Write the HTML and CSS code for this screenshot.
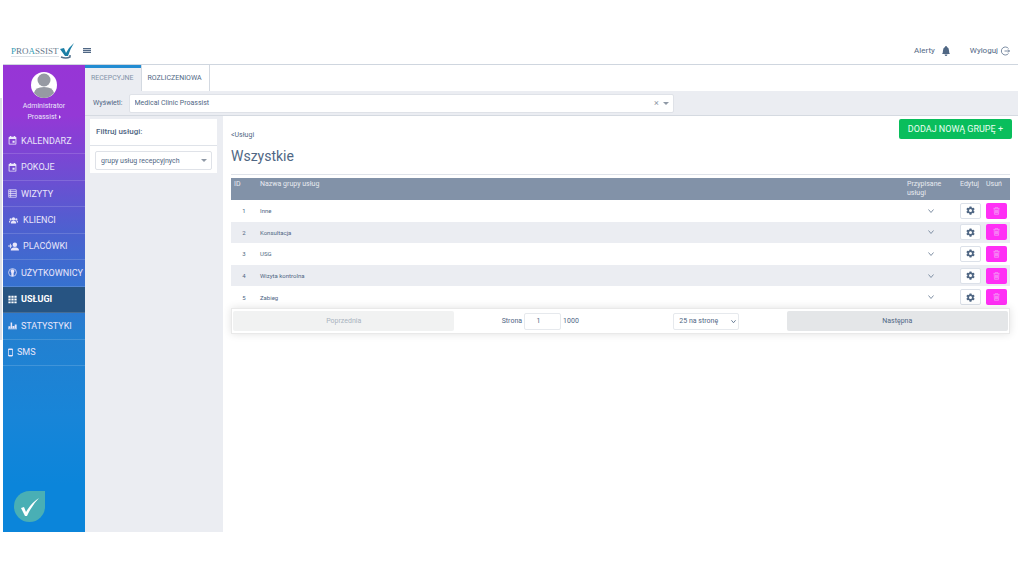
FILE: index.html
```html
<!DOCTYPE html>
<html lang="pl">

<head>
    <meta charset="UTF-8">
    <meta name="viewport" content="width=device-width, initial-scale=1.0">
    <title>Proassist - Usługi</title>
    <link rel="stylesheet" href="styles.css">
</head>

<body>
    <!-- ikony -->
    <svg class="sprite" aria-hidden="true">
        <symbol id="i-calendar" viewBox="2 1 20 21"><path d="M19 3h-1V1h-3v2H9V1H6v2H5a2 2 0 0 0-2 2v14a2 2 0 0 0 2 2h14a2 2 0 0 0 2-2V5a2 2 0 0 0-2-2zm0 16H5V8h14zM12 12h5v5h-5z"/></symbol>
        <symbol id="i-list" viewBox="0 0 24 24"><path fill="none" stroke="currentColor" stroke-width="2" d="M2 2h20v20H2zM2 7h20M2 12h20M2 17h20M7 2v20"/></symbol>
        <symbol id="i-group" viewBox="0 0 24 24"><circle cx="12" cy="8" r="4.500"/><circle cx="4.500" cy="9" r="3"/><circle cx="19.500" cy="9" r="3"/><path d="M5 20v-3q0-4 4-4h6q4 0 4 4v3zM0 17v-2q0-3 4-3-1 2-1 5zM24 17v-2q0-3-4-3 1 2 1 5z"/></symbol>
        <symbol id="i-add" viewBox="0 2 24 20"><circle cx="15" cy="8" r="5"/><path d="M6 10V6H4v4H0v2h4v4h2v-4h3v-2zM6 21v-2c0-4 5-5 9-5s9 1 9 5v2z"/></symbol>
        <symbol id="i-user" viewBox="0 0 24 24"><circle cx="12" cy="12" r="10.500" fill="none" stroke="currentColor" stroke-width="2"/><path d="M12 3c3 0 5 2 5 5 0 2-1 4-2 5v8q-3 2-6 0v-8c-1-1-2-3-2-5 0-3 2-5 5-5z"/></symbol>
        <symbol id="i-grid" viewBox="0 0 24 24"><path d="M1 2h6v5H1zM9 2h6v5H9zM17 2h6v5h-6zM1 9.500h6v5H1zM9 9.500h6v5H9zM17 9.500h6v5h-6zM1 17h6v5H1zM9 17h6v5H9zM17 17h6v5h-6z"/></symbol>
        <symbol id="i-stats" viewBox="0 0 24 24"><path d="M0 20h24v2H0zM1 14h5v5H1zM7 4h4v15H7zM12 13h5v6h-5zM18 9h5v10h-5z"/></symbol>
        <symbol id="i-phone" viewBox="0 0 14 24"><path fill-rule="evenodd" d="M3 1h8q3 0 3 3v16q0 3-3 3H3q-3 0-3-3V4q0-3 3-3zM2 5v14h10V5z"/></symbol>
        <symbol id="i-gear" viewBox="0 0 24 24"><path fill-rule="evenodd" d="M9.500 1h5l.6 3.300 2.300 1.300 3.200-1.200 2.500 4.300-2.600 2.200v2.200l2.600 2.200-2.500 4.300-3.200-1.200-2.300 1.300-.6 3.300h-5l-.6-3.300-2.300-1.300-3.200 1.200L.9 15.300l2.600-2.200v-2.200L.9 8.700l2.500-4.300 3.200 1.200 2.300-1.300zM12 8a4 4 0 1 0 0 8 4 4 0 0 0 0-8z"/></symbol>
        <symbol id="i-trash" viewBox="0 0 20 24"><path fill="none" stroke="currentColor" stroke-width="2" d="M1 4h18M7 4V1h6v3M3 4l1 18h12l1-18M7 8v11M10 8v11M13 8v11"/></symbol>
        <symbol id="i-down" viewBox="0 0 12 12"><path fill="none" stroke="currentColor" stroke-width="2" d="M1 3l5 6 5-6"/></symbol>
    </svg>

    <div class="page">
        <header class="header">
            <a href="#" class="logo">
                <span class="logo-text"><b>P</b>RO<b>A</b>SSIST</span>
                <svg class="logo-check" viewBox="0 0 16 16"><path fill="#1b7fa6" d="M1 6l4-1 2 5Q10 4 15 0q-4 6-6 13H6z"/><path fill="none" stroke="#54718c" stroke-width="1.500" d="M2 14q5 2 9 0v-2"/></svg>
            </a>
            <button class="burger" aria-label="Menu"></button>
            <a href="#" class="header-link alerts">Alerty
                <svg viewBox="0 0 16 20"><path d="M8 0q2 0 2 2 4 1 4 7 0 5 2 7H0q2-2 2-7 0-6 4-7 0-2 2-2zM5 17h6q-1 3-3 3t-3-3z"/></svg>
            </a>
            <a href="#" class="header-link">Wyloguj
                <svg viewBox="0 0 20 20"><path fill="none" stroke="currentColor" stroke-width="1.500" d="M17 5a8 8 0 1 0 0 10M9 10h10M16 7l3 3-3 3"/></svg>
            </a>
        </header>

        <div class="main">
            <nav class="sidebar">
                <a href="#" class="profile">
                    <svg class="avatar" viewBox="0 0 26 26"><circle cx="13" cy="13" r="13" fill="#fff"/><circle cx="13" cy="8" r="6.500" fill="#969aa3"/><path fill="#969aa3" d="M3 21q1-6 10-6t10 6q-4 5-10 5T3 21z"/></svg>
                    <span>Administrator<br>Proassist <i class="arrow"></i></span>
                </a>
                <div class="menu">
                    <a href="#"><svg><use href="#i-calendar"/></svg>KALENDARZ</a>
                    <a href="#"><svg><use href="#i-calendar"/></svg>POKOJE</a>
                    <a href="#"><svg><use href="#i-list"/></svg>WIZYTY</a>
                    <a href="#"><svg class="wide"><use href="#i-group"/></svg>KLIENCI</a>
                    <a href="#"><svg class="wide"><use href="#i-add"/></svg>PLACÓWKI</a>
                    <a href="#"><svg><use href="#i-user"/></svg>UŻYTKOWNICY</a>
                    <a href="#" class="active"><svg><use href="#i-grid"/></svg>USŁUGI</a>
                    <a href="#"><svg><use href="#i-stats"/></svg>STATYSTYKI</a>
                    <a href="#"><svg class="narrow"><use href="#i-phone"/></svg>SMS</a>
                </div>
                <a href="#" class="badge" aria-label="Proassist">
                    <svg viewBox="0 0 20 20"><path fill="#fff" d="M1 11l3-1 2 5Q11 6 19 1 12 8 7 19H5z"/></svg>
                </a>
            </nav>

            <div class="workspace">
                <div class="tabs">
                    <a href="#" class="tab active">RECEPCYJNE</a>
                    <a href="#" class="tab">ROZLICZENIOWA</a>
                </div>
                <div class="clinic-bar">
                    <label for="clinic">Wyświetl:</label>
                    <div class="clinic-select">
                        <select id="clinic" class="select">
                            <option>Medical Clinic Proassist</option>
                        </select>
                        <button class="clear" aria-label="Wyczyść">×</button>
                    </div>
                </div>

                <div class="columns">
                    <aside class="filters">
                        <div class="filter-card">
                            <label for="group">Filtruj usługi:</label>
                            <div class="filter-body">
                                <select id="group" class="select">
                                    <option>grupy usług recepcyjnych</option>
                                </select>
                            </div>
                        </div>
                    </aside>

                    <main class="content">
                        <div class="content-top">
                            <a href="#" class="back">&lt;Usługi</a>
                            <button class="add-btn">DODAJ NOWĄ GRUPĘ +</button>
                        </div>
                        <h1>Wszystkie</h1>

                        <div class="table-box">
                            <table>
                                <thead>
                                    <tr>
                                        <th class="col-id">ID</th>
                                        <th>Nazwa grupy usług</th>
                                        <th class="col-assigned">Przypisane usługi</th>
                                        <th class="col-edit">Edytuj</th>
                                        <th class="col-delete">Usuń</th>
                                    </tr>
                                </thead>
                                <tbody>
                                    <tr>
                                        <td>1</td>
                                        <td>Inne</td>
                                        <td><button class="expand" aria-label="Rozwiń"><svg><use href="#i-down"/></svg></button></td>
                                        <td><button class="edit" aria-label="Edytuj"><svg><use href="#i-gear"/></svg></button></td>
                                        <td><button class="delete" aria-label="Usuń"><svg><use href="#i-trash"/></svg></button></td>
                                    </tr>
                                    <tr>
                                        <td>2</td>
                                        <td>Konsultacja</td>
                                        <td><button class="expand" aria-label="Rozwiń"><svg><use href="#i-down"/></svg></button></td>
                                        <td><button class="edit" aria-label="Edytuj"><svg><use href="#i-gear"/></svg></button></td>
                                        <td><button class="delete" aria-label="Usuń"><svg><use href="#i-trash"/></svg></button></td>
                                    </tr>
                                    <tr>
                                        <td>3</td>
                                        <td>USG</td>
                                        <td><button class="expand" aria-label="Rozwiń"><svg><use href="#i-down"/></svg></button></td>
                                        <td><button class="edit" aria-label="Edytuj"><svg><use href="#i-gear"/></svg></button></td>
                                        <td><button class="delete" aria-label="Usuń"><svg><use href="#i-trash"/></svg></button></td>
                                    </tr>
                                    <tr>
                                        <td>4</td>
                                        <td>Wizyta kontrolna</td>
                                        <td><button class="expand" aria-label="Rozwiń"><svg><use href="#i-down"/></svg></button></td>
                                        <td><button class="edit" aria-label="Edytuj"><svg><use href="#i-gear"/></svg></button></td>
                                        <td><button class="delete" aria-label="Usuń"><svg><use href="#i-trash"/></svg></button></td>
                                    </tr>
                                    <tr>
                                        <td>5</td>
                                        <td>Zabieg</td>
                                        <td><button class="expand" aria-label="Rozwiń"><svg><use href="#i-down"/></svg></button></td>
                                        <td><button class="edit" aria-label="Edytuj"><svg><use href="#i-gear"/></svg></button></td>
                                        <td><button class="delete" aria-label="Usuń"><svg><use href="#i-trash"/></svg></button></td>
                                    </tr>
                                </tbody>
                            </table>
                            <div class="pagination">
                                <button class="page-btn" disabled>Poprzednia</button>
                                <div class="page-center">
                                    <div class="page-info">
                                        <label for="page">Strona</label>
                                        <input id="page" type="text" value="1">
                                        <span>1000</span>
                                    </div>
                                    <div class="page-size">
                                        <select aria-label="Liczba na stronę">
                                            <option>25 na stronę</option>
                                        </select>
                                        <svg><use href="#i-down"/></svg>
                                    </div>
                                </div>
                                <button class="page-btn">Następna</button>
                            </div>
                        </div>
                    </main>
                </div>
            </div>
        </div>
    </div>
</body>

</html>
```
FILE: styles.css
```css
* {
    box-sizing: border-box;
}

body {
    margin: 0;
    padding: 37px 6px 44px 3px;
    min-height: 100vh;
    display: flex;
    background: #fff;
    color: #506784;
    font-family: Roboto, "Liberation Sans", sans-serif;
    font-size: 7px;
}

/* fragment tła przy lewej krawędzi */
body::before {
    content: "";
    position: absolute;
    left: 0;
    top: 98px;
    width: 2px;
    height: 242px;
    background: #dfe1e7;
}

a {
    color: inherit;
    text-decoration: none;
}

button,
select,
input {
    font-family: inherit;
    font-size: inherit;
    color: inherit;
    margin: 0;
    padding: 0;
}

button {
    cursor: pointer;
}

svg {
    display: block;
    fill: currentColor;
}

.sprite {
    position: absolute;
    width: 0;
    height: 0;
}

.page {
    flex: 1;
    display: flex;
    flex-direction: column;
}

/* górny pasek */
.header {
    height: 28px;
    display: flex;
    align-items: center;
    padding: 0 8px;
    border-bottom: 1px solid #cfd6df;
    font-size: 8px;
}

.logo {
    display: flex;
    align-items: center;
}

.logo-text {
    margin-top: 2px;
    font-family: "Liberation Serif", serif;
    font-size: 9px;
    line-height: 10px;
    color: #66788c;
    border-bottom: 1px solid #dde2e8;
}

.logo-text b {
    font-weight: normal;
    color: #2f9bb5;
}

.logo-check {
    width: 16px;
    height: 16px;
}

.burger {
    width: 8px;
    height: 5px;
    margin: 0 auto 0 8px;
    border: 0;
    background: repeating-linear-gradient(#506784 0 1px, #c3ccd8 1px 2px);
}

.header-link {
    display: flex;
    align-items: center;
    gap: 2px;
}

.header-link svg {
    width: 10px;
    height: 10px;
}

.alerts {
    gap: 7px;
    margin-right: 20px;
}

.alerts svg {
    width: 8px;
}

.main {
    flex: 1;
    display: flex;
}

/* menu boczne */
.sidebar {
    width: 82px;
    flex: none;
    display: flex;
    flex-direction: column;
    color: #e9e6fa;
    background: linear-gradient(#9735d6 0, #9438d6 50px, #4a62cf 170px, #2380d0 270px, #1885d8 350px, #0b85da 420px);
}

.profile {
    height: 63px;
    padding-top: 7px;
    display: flex;
    flex-direction: column;
    align-items: center;
    gap: 3px;
    text-align: center;
    line-height: 11px;
}

.avatar {
    width: 26px;
    height: 26px;
}

.arrow {
    display: inline-block;
    border: 2px solid transparent;
    border-left-color: currentColor;
    border-right: 0;
    vertical-align: middle;
}

.menu {
    height: 238px;
    display: grid;
    grid-auto-rows: 1fr;
    font-size: 9px;
}

.menu a {
    display: flex;
    align-items: center;
    gap: 4px;
    padding-left: 5px;
    border-bottom: 1px solid rgba(255, 255, 255, 0.15);
}

.menu svg {
    width: 9px;
    height: 9px;
}

.menu .wide {
    width: 11px;
}

.menu .narrow {
    width: 5px;
}

.menu .active {
    background: #275482;
    color: #fff;
    font-weight: bold;
}

.badge {
    margin: auto 0 10px 11px;
    width: 31px;
    height: 31px;
    display: flex;
    align-items: center;
    justify-content: center;
    background: #49afb5;
    border-radius: 50% 0 50% 50%;
}

.badge svg {
    width: 20px;
    height: 20px;
}

.workspace {
    flex: 1;
    display: flex;
    flex-direction: column;
    min-width: 0;
}

/* zakładki */
.tabs {
    height: 26px;
    display: flex;
}

.tab {
    display: flex;
    align-items: center;
    padding: 0 7px 0 6px;
    border-right: 1px solid #d3d9e1;
}

.tab.active {
    background: #ebedf2;
    color: #8292a8;
    box-shadow: inset 0 3px #228cd2;
}

.clinic-bar {
    height: 25px;
    display: flex;
    align-items: center;
    gap: 6px;
    padding-left: 8px;
    background: #ebedf2;
    border-bottom: 1px solid #d5dae1;
}

.clinic-select {
    position: relative;
    width: 545px;
}

.select {
    width: 100%;
    height: 19px;
    padding: 0 5px;
    appearance: none;
    border: 1px solid #dfe2e8;
    border-radius: 2px;
    background: #fff;
}

.clinic-select::after,
.filter-body::after {
    content: "";
    position: absolute;
    right: 5px;
    top: 8px;
    border: 3px solid transparent;
    border-top-color: #8f99a6;
    border-bottom: 0;
}

.clear {
    position: absolute;
    right: 13px;
    top: 5px;
    width: 8px;
    height: 8px;
    border: 0;
    background: none;
    font-size: 9px;
    line-height: 8px;
    color: #8f99a6;
}

.columns {
    flex: 1;
    display: flex;
}

.filters {
    width: 138px;
    padding: 3px 6px 0 5px;
    background: #ebedf2;
}

.filter-card {
    background: #fff;
}

.filter-card label {
    display: block;
    padding-left: 6px;
    font-size: 8px;
    font-weight: 500;
    line-height: 26px;
    border-bottom: 1px solid #dfe3e9;
}

.filter-body {
    position: relative;
    margin: 5px;
    padding-bottom: 3px;
}

/* treść */
.content {
    flex: 1;
    padding: 3px 8px 0;
    min-width: 0;
}

.content-top {
    display: flex;
    justify-content: space-between;
    align-items: center;
    margin-right: -2px;
}

.back {
    padding-top: 11px;
}

.add-btn {
    height: 20px;
    padding: 0 9px;
    border: 0;
    border-radius: 2px;
    background: #09be5c;
    color: #e8fff1;
    font-size: 9px;
}

h1 {
    margin: 0 0 3px;
    padding: 8px 0 9px;
    font-size: 14px;
    font-weight: normal;
    line-height: 18px;
    border-bottom: 1px solid #dfe3ea;
}

table {
    width: 100%;
    height: 130px;
    table-layout: fixed;
    border-collapse: collapse;
}

th {
    height: 22px;
    padding: 2px 3px 0;
    background: #8292a8;
    color: #e8ebf0;
    font-weight: normal;
    line-height: 9px;
    text-align: left;
    vertical-align: top;
}

.col-id {
    width: 26px;
}

.col-assigned {
    width: 53px;
}

.col-edit {
    width: 26px;
}

.col-delete {
    width: 27px;
}

td {
    padding: 0 3px;
    font-size: 6px;
}

td:first-child {
    text-align: center;
}

td:nth-child(n+3) {
    padding: 0 2px;
}

tbody tr:nth-child(even) {
    background: #ebedf2;
}

td button {
    display: flex;
    align-items: center;
    justify-content: center;
    width: 21px;
    height: 16px;
    margin: 0 auto;
    border: 0;
    border-radius: 2px;
}

.expand {
    background: none;
    color: #8090a5;
}

.expand svg {
    width: 6px;
    height: 6px;
}

.edit {
    background: #fff;
    border: 1px solid #dce1e9;
}

.edit svg {
    width: 9px;
    height: 9px;
}

.delete {
    background: #ff2ff5;
    color: #f3a5f5;
}

.delete svg {
    width: 7px;
    height: 8px;
}

/* stronicowanie */
.pagination {
    display: flex;
    padding: 2px 1px;
    border: 1px solid #e9e9e9;
    box-shadow: 0 0 8px rgba(0, 0, 0, 0.12);
}

.page-btn {
    flex: 1;
    height: 20px;
    border: 0;
    border-radius: 2px;
    background: #e4e6e8;
}

.page-btn:disabled {
    background: #f1f2f2;
    color: #a9b2c0;
    cursor: default;
}

.page-center {
    flex: 1.5;
    display: flex;
    align-items: center;
    justify-content: space-around;
}

.page-info {
    display: flex;
    align-items: center;
    gap: 2px;
}

.page-info input {
    width: 37px;
    height: 17px;
    padding-right: 8px;
    border: 1px solid #e6e9ed;
    border-radius: 2px;
    text-align: center;
}

.page-size {
    position: relative;
}

.page-size select {
    width: 66px;
    height: 17px;
    padding-left: 5px;
    appearance: none;
    border: 1px solid #e6e9ed;
    border-radius: 2px;
    background: #fff;
}

.page-size svg {
    position: absolute;
    right: 3px;
    top: 6px;
    width: 5px;
    height: 5px;
}
```
